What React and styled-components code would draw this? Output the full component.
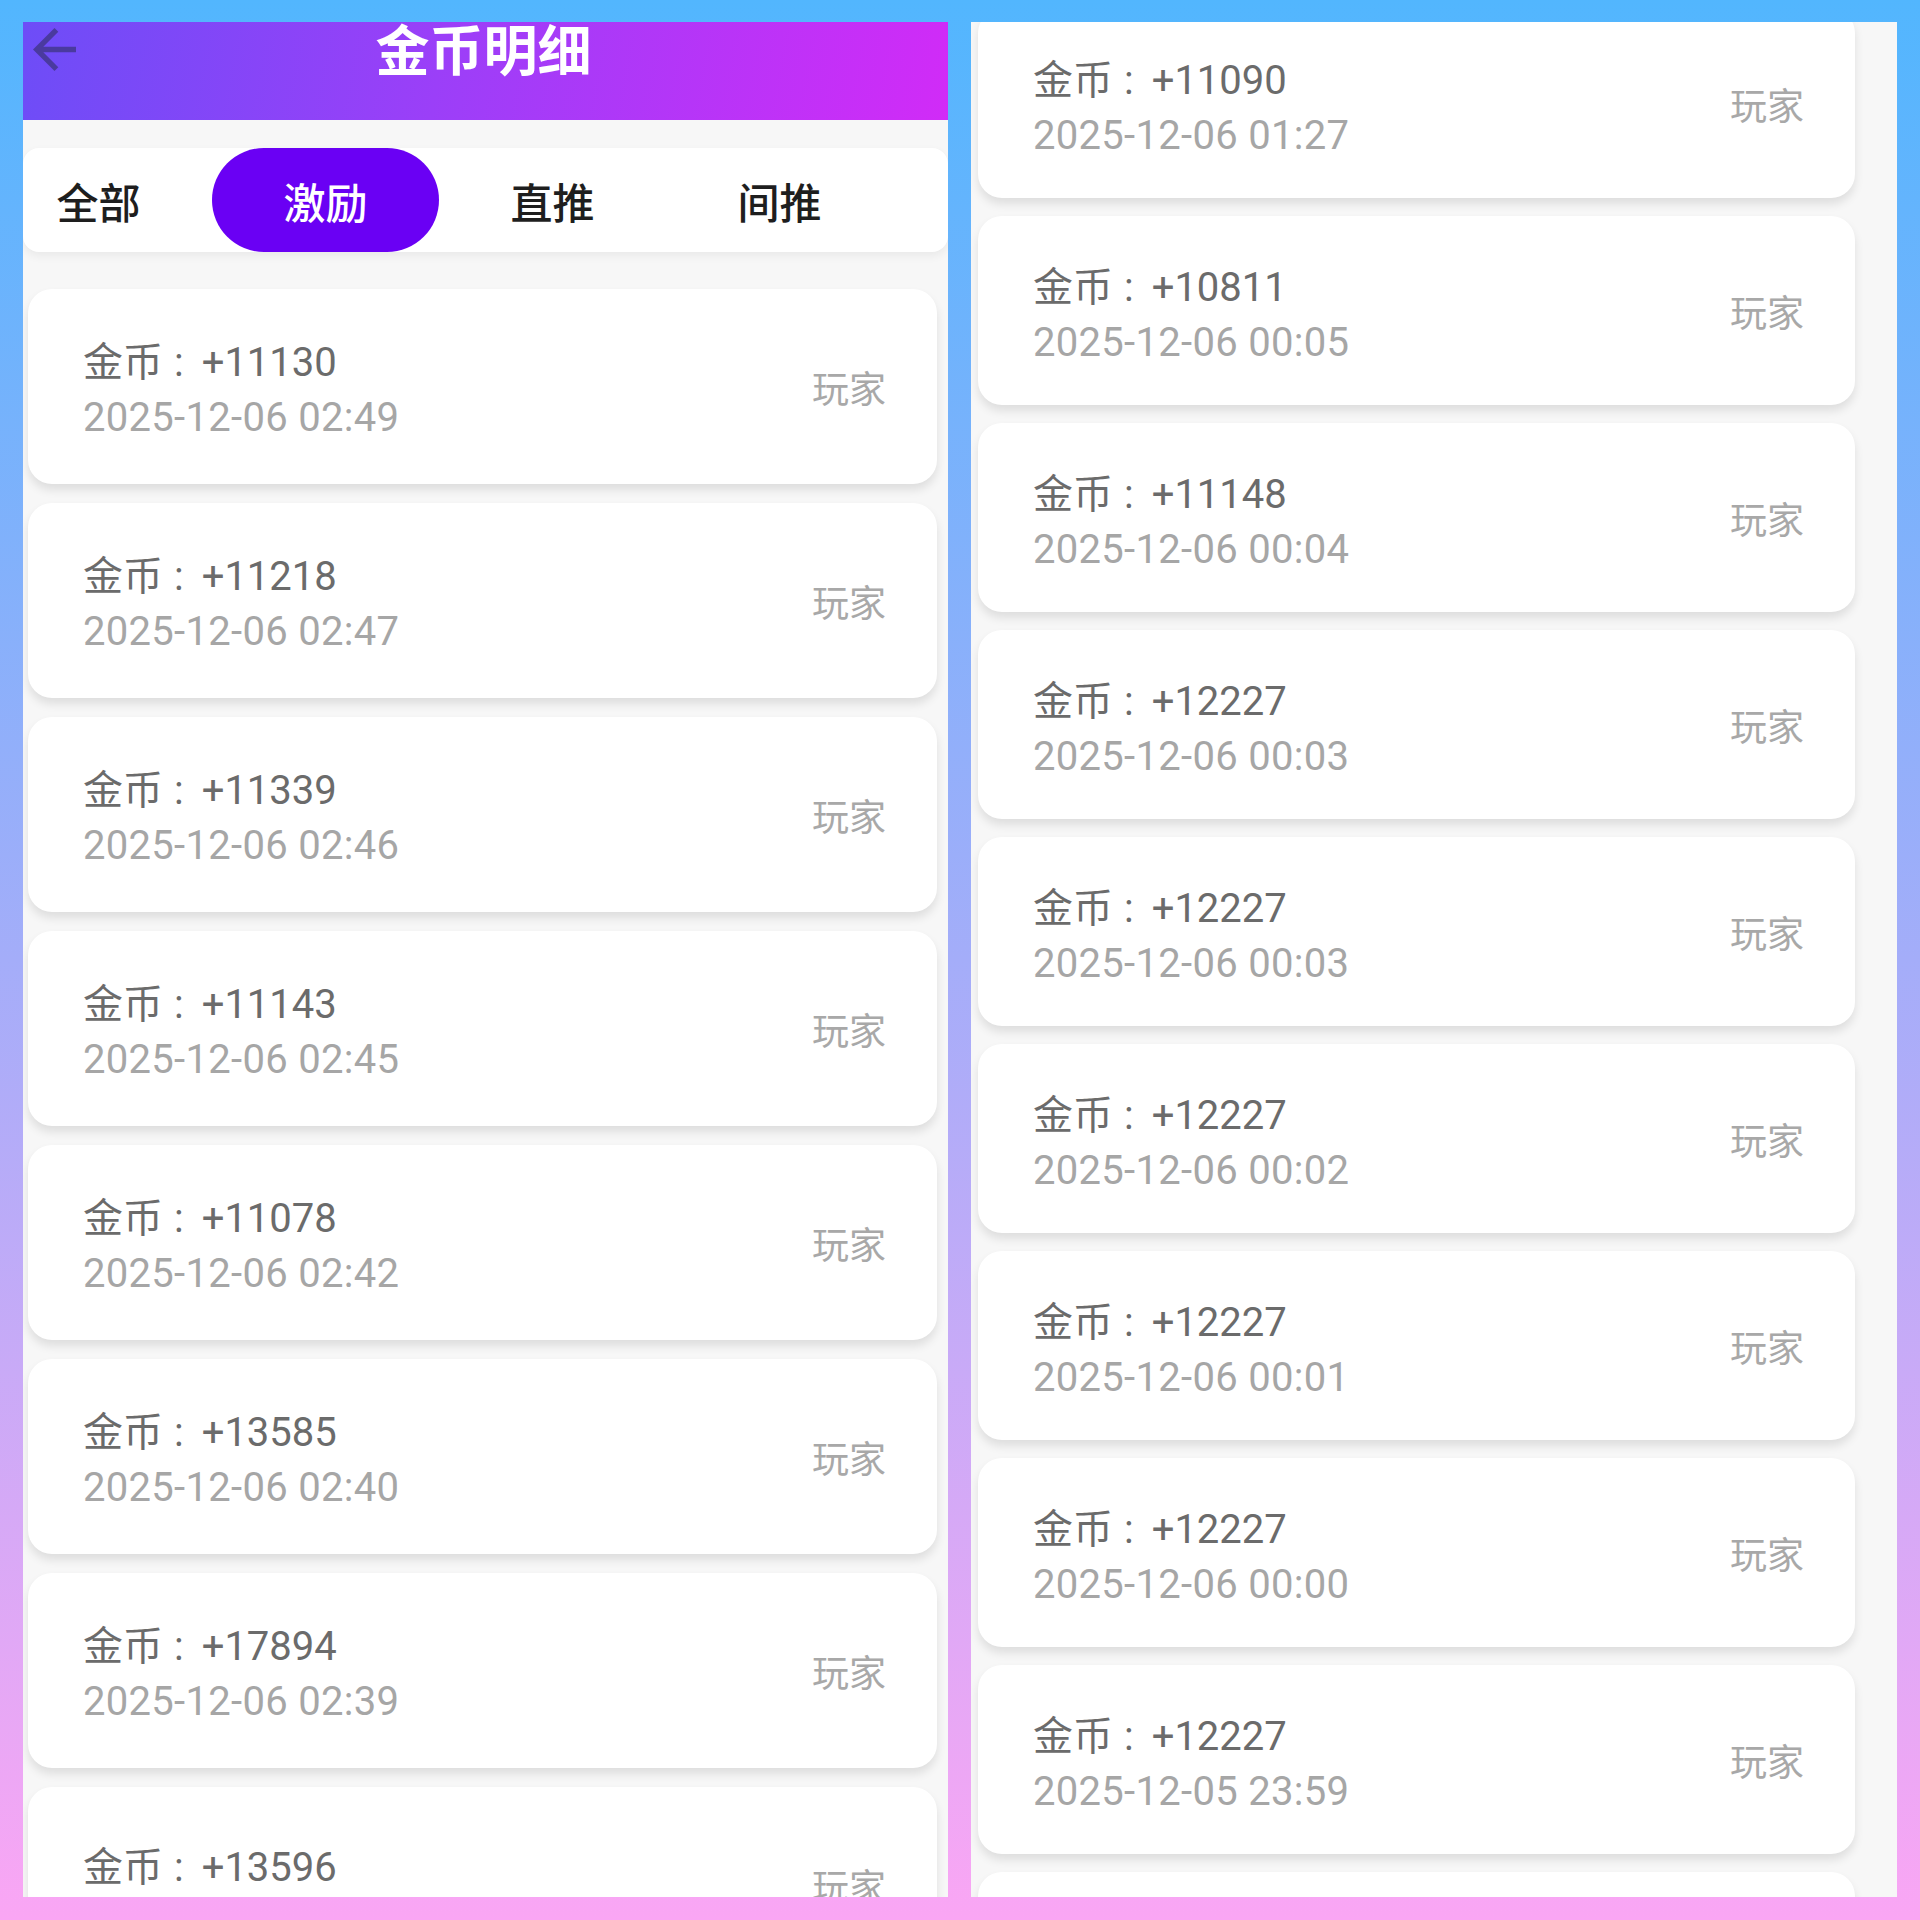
import React from 'react';
import styled, { createGlobalStyle } from 'styled-components';

const GlobalStyle = createGlobalStyle`
  html, body { margin: 0; padding: 0; }
  body { font-family: Roboto, "Noto Sans CJK SC", sans-serif; }
  * { box-sizing: border-box; }
`;

const Page = styled.div`
  width: 1920px;
  height: 1920px;
  padding: 22px 23px 23px 23px;
  background: linear-gradient(180deg, #52b6fe 0%, #a4adf9 50%, #faa6f4 100%);
  display: grid;
  grid-template-columns: 925px 926px;
  column-gap: 23px;
`;

const Panel = styled.section`
  background: #f7f7f7;
  overflow: hidden;
  display: flex;
  flex-direction: column;
  min-height: 0;
`;

const Header = styled.header`
  flex: none;
  height: 98px;
  background: linear-gradient(100deg, #6d4df7 0%, #9b3ff8 45%, #d12bf7 100%);
  display: grid;
  grid-template-columns: 1fr auto 1fr;
  align-items: start;
`;

const BackButton = styled.button`
  justify-self: start;
  border: 0;
  background: transparent;
  padding: 6px 0 0 10px;
  margin: 0;
  display: flex;
  color: #4a3a9f;
  cursor: pointer;
`;

const Title = styled.h1`
  margin: 0 4px 0 0;
  font-family: "Noto Sans CJK SC", sans-serif;
  font-size: 54px;
  line-height: 52px;
  font-weight: 700;
  color: #ffffff;
`;

const TabBar = styled.nav`
  flex: none;
  margin-top: 28px;
  height: 104px;
  background: #ffffff;
  border-radius: 16px;
  box-shadow: 0 4px 10px rgba(0, 0, 0, 0.06);
  overflow: hidden;
  display: flex;
`;

const TabStrip = styled.div`
  display: flex;
  margin-left: -38px;
`;

const Tab = styled.div`
  flex: none;
  width: 227px;
  display: flex;
  align-items: center;
  justify-content: center;
  font-family: "Noto Sans CJK SC", sans-serif;
  font-size: 42px;
  font-weight: 500;
  color: ${p => (p.$active ? '#ffffff' : '#1e1e1e')};
  background: ${p => (p.$active ? '#6a00f4' : 'transparent')};
  border-radius: 52px;
`;

const List = styled.div`
  display: flex;
  flex-direction: column;
  gap: ${p => p.$gap}px;
  padding: ${p => p.$pad};
  margin-top: ${p => p.$shift}px;
`;

const Card = styled.div`
  flex: none;
  height: ${p => p.$h}px;
  background: #ffffff;
  border-radius: 24px;
  box-shadow: 0 6px 10px rgba(0, 0, 0, 0.1);
  display: flex;
  align-items: center;
  justify-content: space-between;
  padding: 0 51px 0 55px;
`;

const Info = styled.div`
  display: flex;
  flex-direction: column;
  padding-top: ${p => p.$top}px;
`;

const Amount = styled.div`
  font-size: 40px;
  line-height: 55px;
  color: #6b6b6b;
  white-space: nowrap;
`;

const Colon = styled.span`
  padding: 0 18px 0 11px;
`;

const DateText = styled.div`
  font-size: 40px;
  line-height: 55px;
  letter-spacing: 0.3px;
  color: #a6a6a6;
  white-space: nowrap;
`;

const Role = styled.div`
  font-family: "Noto Sans CJK SC", sans-serif;
  font-size: 37px;
  color: #a8a8a8;
`;

const ArrowIcon = () => (
  <svg width="43" height="43" viewBox="4 4 16 16" fill="currentColor">
    <path d="M20 11H7.83l5.59-5.59L12 4l-8 8 8 8 1.41-1.41L7.83 13H20v-2z" />
  </svg>
);

const leftItems = [
  ['11130', '2025-12-06 02:49'],
  ['11218', '2025-12-06 02:47'],
  ['11339', '2025-12-06 02:46'],
  ['11143', '2025-12-06 02:45'],
  ['11078', '2025-12-06 02:42'],
  ['13585', '2025-12-06 02:40'],
  ['17894', '2025-12-06 02:39'],
  ['13596', '2025-12-06 02:38'],
];

const rightItems = [
  ['11090', '2025-12-06 01:27'],
  ['10811', '2025-12-06 00:05'],
  ['11148', '2025-12-06 00:04'],
  ['12227', '2025-12-06 00:03'],
  ['12227', '2025-12-06 00:03'],
  ['12227', '2025-12-06 00:02'],
  ['12227', '2025-12-06 00:01'],
  ['12227', '2025-12-06 00:00'],
  ['12227', '2025-12-05 23:59'],
  ['12227', '2025-12-05 23:58'],
];

const tabs = ['全部', '激励', '直推', '间推'];

const Record = ({ amount, time, h, top }) => (
  <Card $h={h}>
    <Info $top={top}>
      <Amount>
        金币<Colon>:</Colon>+{amount}
      </Amount>
      <DateText>{time}</DateText>
    </Info>
    <Role>玩家</Role>
  </Card>
);

export default function App() {
  return (
    <>
      <GlobalStyle />
      <Page>
        <Panel>
          <Header>
            <BackButton aria-label="返回">
              <ArrowIcon />
            </BackButton>
            <Title>金币明细</Title>
            <span />
          </Header>
          <TabBar>
            <TabStrip>
              {tabs.map((t, i) => (
                <Tab key={t} $active={i === 1}>{t}</Tab>
              ))}
            </TabStrip>
          </TabBar>
          <List $gap={19} $pad="37px 11px 0 5px" $shift={0}>
            {leftItems.map(([a, t], i) => (
              <Record
                key={i}
                amount={a}
                time={t}
                h={195}
                top={i === leftItems.length - 1 ? 20 : 6}
              />
            ))}
          </List>
        </Panel>
        <Panel>
          <List $gap={18} $pad="0 42px 0 7px" $shift={-13}>
            {rightItems.map(([a, t], i) => (
              <Record key={i} amount={a} time={t} h={189} top={8} />
            ))}
          </List>
        </Panel>
      </Page>
    </>
  );
}
